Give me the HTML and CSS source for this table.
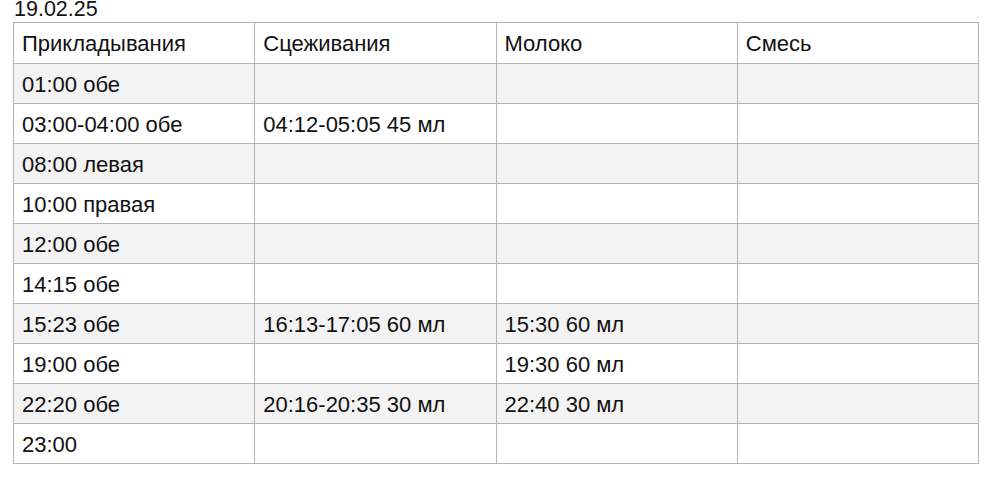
FILE: index.html
```html
<!DOCTYPE html>
<html>
<head>
<meta charset="utf-8">
<link rel="stylesheet" href="styles.css">
</head>
<body>
<div class="page">
  <div class="title">19.02.25</div>
  <table class="log">
    <tr class="head"><td>Прикладывания</td><td>Сцеживания</td><td>Молоко</td><td>Смесь</td></tr>
    <tr class="alt"><td>01:00 обе</td><td></td><td></td><td></td></tr>
    <tr><td>03:00-04:00 обе</td><td>04:12-05:05 45 мл</td><td></td><td></td></tr>
    <tr class="alt"><td>08:00 левая</td><td></td><td></td><td></td></tr>
    <tr><td>10:00 правая</td><td></td><td></td><td></td></tr>
    <tr class="alt"><td>12:00 обе</td><td></td><td></td><td></td></tr>
    <tr><td>14:15 обе</td><td></td><td></td><td></td></tr>
    <tr class="alt"><td>15:23 обе</td><td>16:13-17:05 60 мл</td><td>15:30 60 мл</td><td></td></tr>
    <tr><td>19:00 обе</td><td></td><td>19:30 60 мл</td><td></td></tr>
    <tr class="alt"><td>22:20 обе</td><td>20:16-20:35 30 мл</td><td>22:40 30 мл</td><td></td></tr>
    <tr><td>23:00</td><td></td><td></td><td></td></tr>
  </table>
</div>
</body>
</html>
```
FILE: styles.css
```css
html, body {
  margin: 0;
  padding: 0;
  background: #ffffff;
}
body {
  font-family: "Liberation Sans", Arial, sans-serif;
  color: #111111;
}
.page {
  padding-left: 13px;
  width: 966px;
}
.title {
  font-size: 21.5px;
  line-height: 18px;
  height: 22px;
  padding-left: 1px;
}
.log {
  border-collapse: collapse;
  width: 966px;
  table-layout: fixed;
  font-size: 22px;
}
.log td {
  border: 1px solid #b3b3b3;
  height: 40px;
  padding: 2px 0 0 8px;
  line-height: 22px;
  vertical-align: middle;
  box-sizing: border-box;
}
.log tr.head td {
  height: 41px;
}
.log tr.alt td {
  background: #f3f3f3;
}
```
